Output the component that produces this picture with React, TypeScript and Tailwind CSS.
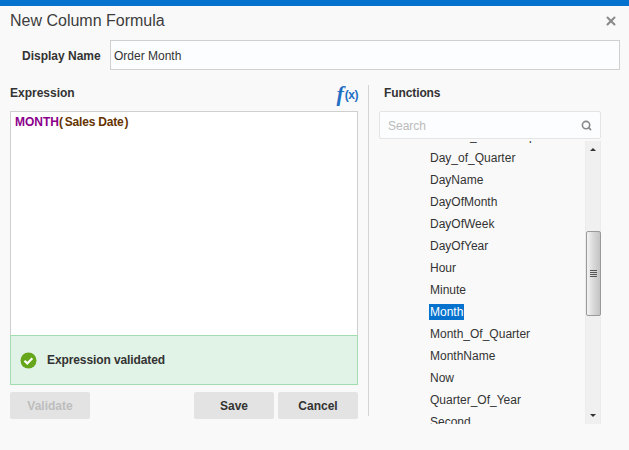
import { Search, X } from 'lucide-react'

const fns = [
  'Current_Timestamp',
  'Day_of_Quarter',
  'DayName',
  'DayOfMonth',
  'DayOfWeek',
  'DayOfYear',
  'Hour',
  'Minute',
  'Month',
  'Month_Of_Quarter',
  'MonthName',
  'Now',
  'Quarter_Of_Year',
  'Second',
]

function Scrollbar() {
  return (
    <div className="flex h-full w-[16px] shrink-0 flex-col items-center bg-[#f0f0f0] border-x border-[#ececec]">
      <div className="flex h-[17px] w-full items-center justify-center">
        <div className="h-0 w-0 border-x-[3px] border-b-[3px] border-x-transparent border-b-[#333]" />
      </div>
      <div className="h-[73px]" />
      <div className="flex h-[85px] w-[15px] flex-col items-center justify-center gap-[1px] rounded-[2px] border border-[#9a9a9a] bg-gradient-to-r from-[#f4f4f4] via-[#d8d8d8] to-[#c4c4c4]">
        <div className="h-px w-[7px] bg-[#555]" />
        <div className="h-px w-[7px] bg-[#555]" />
        <div className="h-px w-[7px] bg-[#555]" />
        <div className="h-px w-[7px] bg-[#555]" />
      </div>
      <div className="flex-1" />
      <div className="flex h-[17px] w-full items-center justify-center">
        <div className="h-0 w-0 border-x-[3px] border-t-[3px] border-x-transparent border-t-[#333]" />
      </div>
    </div>
  )
}

export default function App() {
  return (
    <div className="flex h-[450px] w-[629px] flex-col overflow-hidden border-t-[6px] border-[#0572ce] bg-[#f9f9f9] font-['Liberation_Sans',sans-serif] text-[12px] text-[#333]">
      <div className="flex h-[29px] items-center justify-between pl-[10px] pr-[11px]">
        <h1 className="text-[16px] leading-[20px] text-[#3d3d3d]">New Column Formula</h1>
        <X size={14} strokeWidth={3.5} className="text-[#8a8a8a]" />
      </div>

      <div className="mt-[5px] flex items-center pl-[22px] pr-[9px]">
        <label className="w-[88px] pt-[2px] font-bold">Display Name</label>
        <input
          readOnly
          value="Order Month"
          className="h-[30px] flex-1 border border-[#d0d0d0] bg-[#fcfdfe] px-[3px] pt-[2px] text-[12px] outline-none"
        />
      </div>

      <div className="mt-[15px] flex pl-[10px] pr-[28px]">
        <div className="flex w-[348px] shrink-0 flex-col">
          <div className="flex h-[26px] items-start justify-between">
            <span className="mt-px font-bold leading-[14px]">Expression</span>
            <span className="-mt-[1px] flex items-start font-['Liberation_Serif',serif] font-bold italic leading-[20px] text-[#1f6fc4]">
              <span className="text-[22px]">f</span>
              <span className="ml-[1px] mt-[1px] font-['Liberation_Sans',sans-serif] text-[12px] tracking-[-0.5px] not-italic">
                (x)
              </span>
            </span>
          </div>
          <div className="flex h-[274px] flex-col border border-[#cfcfcf] bg-white">
            <div className="h-[223px] px-[4px] py-[3px] font-bold leading-[14px]">
              <span className="text-[#8b008b]">MONTH</span>
              <span className="tracking-[-0.2px] text-[#663300]">
                (<span className="ml-[2px]">Sales Date</span>
                <span className="ml-[1px]">)</span>
              </span>
            </div>
            <div className="-mx-px -mb-px flex h-[50px] items-center gap-[10px] border border-[#a3dcb0] bg-[#e1f2e6] pl-[9px] font-bold tracking-[-0.1px]">
              <svg width="17" height="17" viewBox="0 0 17 17">
                <circle cx="8.5" cy="8.5" r="8" fill="#66a61a" />
                <path d="M4.5 8.8l2.8 2.6 5-5.2" fill="none" stroke="#fff" strokeWidth="2.2" />
              </svg>
              <span>Expression validated</span>
            </div>
          </div>
          <div className="mt-[7px] flex gap-[4px]">
            <button className="mr-auto h-[27px] w-[80px] rounded-[2px] bg-[#e3e3e3] font-bold text-[#bdbdbd]">
              Validate
            </button>
            <button className="h-[27px] w-[80px] rounded-[2px] bg-[#e3e3e3] font-bold">Save</button>
            <button className="h-[27px] w-[80px] rounded-[2px] bg-[#e3e3e3] font-bold">Cancel</button>
          </div>
        </div>

        <div className="mx-[10px] mb-[8px] w-px bg-[#d4d4d4]" />

        <div className="flex w-[222px] flex-col">
          <div className="h-[26px] pl-[5px] pt-px font-bold leading-[14px] tracking-[-0.1px]">Functions</div>
          <div className="flex h-[28px] items-center justify-between rounded-[2px] border border-[#e4e4e4] bg-[#fcfdfe] pl-[8px] pr-[8px]">
            <span className="pt-[2px] text-[#bbb]">Search</span>
            <Search size={11} strokeWidth={3.5} className="text-[#888]" />
          </div>
          <div className="mt-[2px] flex h-[283px] justify-end overflow-hidden">
            <div className="h-full flex-1 overflow-hidden pl-[51px]">
              <ul className="-mt-[16px]">
                {fns.map((f) => (
                  <li key={f} className="flex h-[22px] items-center">
                    <span
                      className={
                        f === 'Month' ? 'bg-[#0572ce] px-px -mx-px leading-[16px] text-white' : 'leading-[16px]'
                      }
                    >
                      {f}
                    </span>
                  </li>
                ))}
              </ul>
            </div>
            <Scrollbar />
          </div>
        </div>
      </div>
    </div>
  )
}
